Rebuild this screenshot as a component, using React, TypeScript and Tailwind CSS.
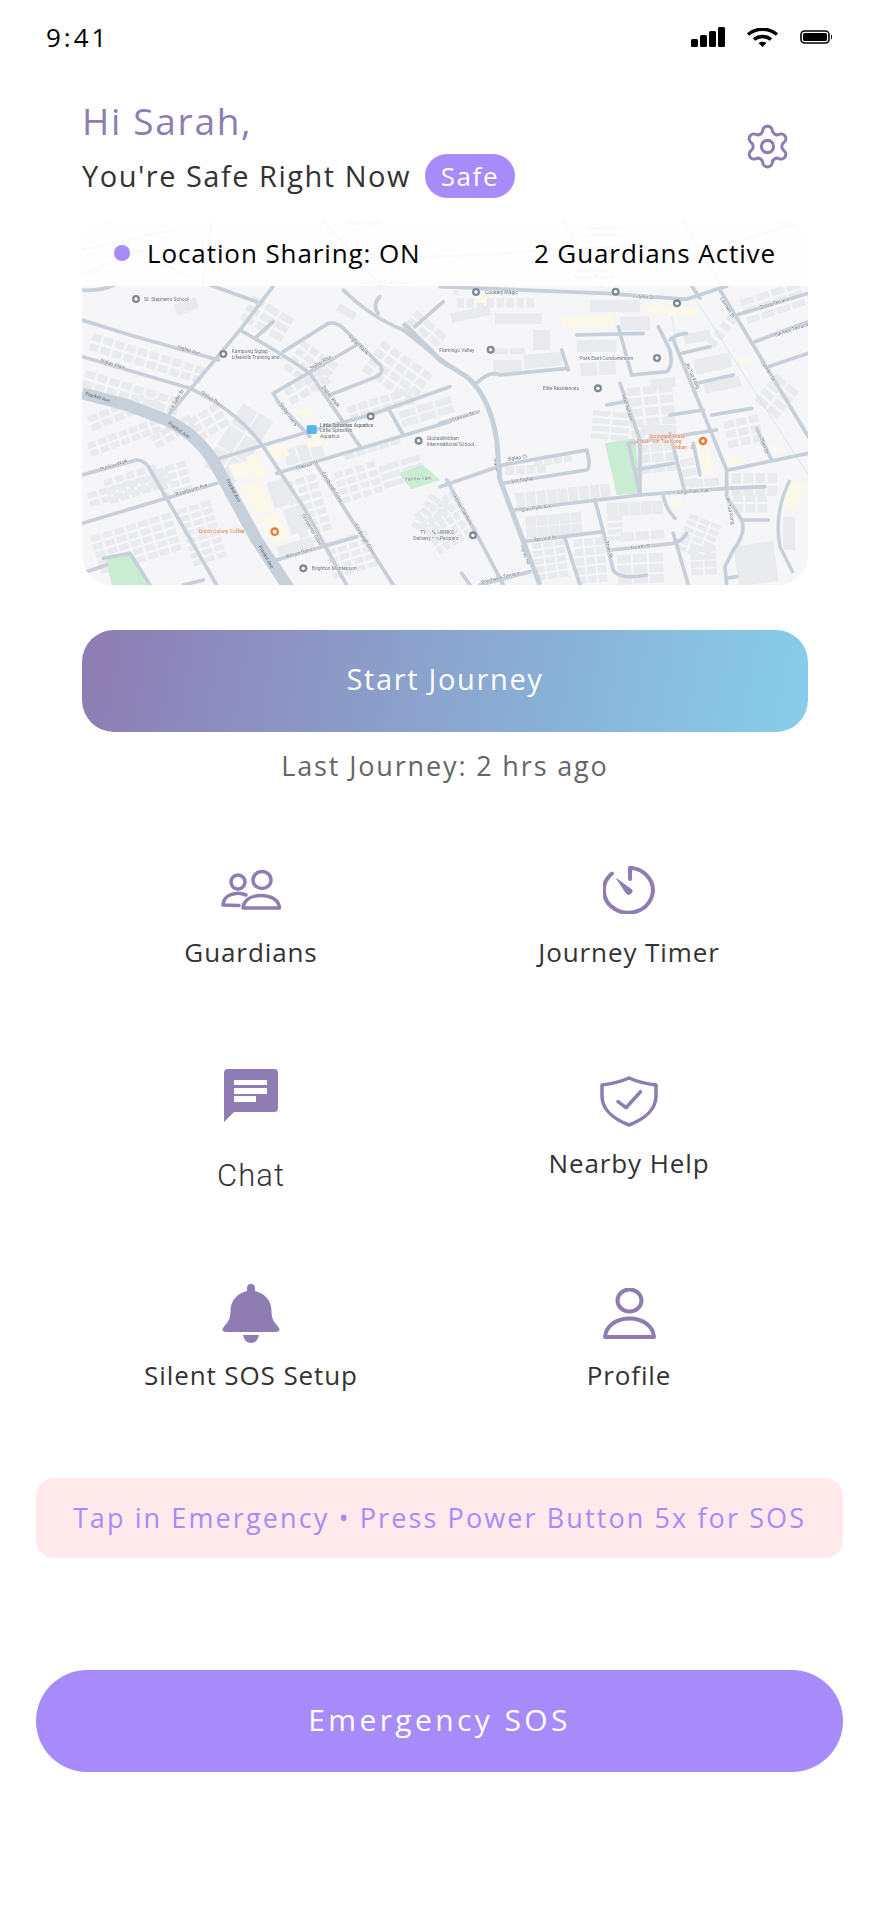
import React from 'react';
import { Settings } from 'lucide-react';

type Block = [number, number, number, number, number, number, number, number];
type Label = [string, number, number, number?, string?];

const leftRoads = [
  'M36 30 Q90 35 140 12',
  'M420 15 L560 65',
  'M36 120 L180 165 L445 240',
  'M610 18 L510 150 L300 400',
  'M36 230 L360 325 Q500 390 580 500 L700 680 L830 915',
  'M510 150 Q650 230 720 280 L870 500',
  'M610 340 L860 195',
  'M610 340 L630 375 L720 470',
  'M640 215 L775 130 Q800 125 820 145 L930 255 Q945 275 920 290 L780 345',
  'M450 535 L700 460 L900 405 L1140 320',
  'M620 580 L1140 425',
  'M36 585 L200 540 Q220 540 235 560 L440 915',
  'M36 730 L440 610',
  'M740 555 L970 915',
  'M620 840 L860 770',
  'M560 170 L610 125',
  'M820 30 Q900 110 1000 150 L1140 260',
  'M930 50 Q905 75 925 100',
  'M1035 140 L1120 65',
  'M955 385 L1000 465',
  'M36 880 L110 855',
  'M100 835 L180 820 L240 915',
  'M340 915 L400 900',
];

const rightRoads = [
  'M0 20 L500 40 L740 58 L860 18',
  'M755 18 L780 55',
  'M840 30 L1105 470',
  'M890 105 L1105 40',
  'M945 185 L1105 125',
  'M985 260 L1105 220',
  'M110 310 Q150 270 180 285 L380 265',
  'M365 210 L385 270',
  'M410 165 L610 160',
  'M535 140 L575 285 L680 275 Q700 260 690 210 L655 140',
  'M690 180 Q710 160 740 160',
  'M700 180 L860 570 L860 650 L905 720 Q920 760 880 810 L855 860 L860 915',
  'M725 220 L810 200',
  'M770 310 L880 285',
  'M690 405 L790 390',
  'M815 405 L935 385',
  'M540 310 L600 480 L600 645',
  'M500 375 L555 365',
  'M0 620 L190 555 L440 510 Q455 560 440 570 L190 610',
  'M20 600 L130 800 L190 915',
  'M565 490 L830 450',
  'M565 490 L600 640',
  'M585 570 L700 550',
  'M690 460 L735 640',
  'M760 490 L780 585',
  'M220 690 L600 645 L860 625 L975 620',
  'M670 650 Q680 690 705 715',
  'M465 660 L520 870 Q535 900 620 885',
  'M250 785 L490 755',
  'M375 775 L420 915',
  'M515 810 L700 790 Q730 780 740 760',
  'M700 760 L745 915',
  'M120 915 L270 875',
  'M65 880 L90 915',
  'M865 570 L1105 520',
  'M950 445 L995 540',
  'M905 720 L985 720',
  'M860 895 L890 890',
  'M0 430 L115 395',
];

const leftBlocks: Block[] = [
  [70, 160, 10, 2, 28, 22, 8, 17],
  [50, 270, 8, 2, 30, 22, 8, 17],
  [50, 410, 6, 2, 30, 20, 8, -22],
  [50, 490, 7, 2, 26, 18, 7, -20],
  [100, 600, 5, 3, 26, 20, 8, -17],
  [50, 640, 7, 2, 30, 18, 7, -17],
  [60, 770, 7, 5, 30, 18, 7, -17],
  [250, 570, 3, 4, 28, 18, 7, -17],
  [320, 690, 3, 8, 30, 16, 7, -17],
  [350, 420, 3, 3, 30, 20, 8, -30],
  [240, 470, 4, 2, 28, 18, 7, -30],
  [640, 610, 3, 7, 28, 18, 8, -17],
  [760, 790, 4, 5, 28, 16, 8, -17],
  [550, 45, 3, 3, 42, 22, 8, 30],
  [700, 180, 4, 4, 26, 20, 8, 35],
  [810, 70, 1, 1, 60, 24, 8, 30],
  [310, 75, 1, 1, 70, 35, 0, -20],
  [640, 330, 4, 2, 28, 22, 8, -30],
  [830, 380, 6, 2, 28, 22, 6, -17],
  [985, 395, 3, 2, 50, 22, 6, -17],
  [940, 180, 5, 4, 30, 22, 8, 35],
  [790, 580, 4, 4, 26, 18, 8, -17],
  [820, 520, 5, 1, 30, 22, 6, -17],
  [925, 560, 2, 3, 60, 18, 8, -17],
  [1080, 640, 2, 5, 36, 16, 8, 30],
  [520, 370, 2, 3, 50, 70, 6, 32],
  [590, 610, 1, 1, 60, 80, 0, -18],
  [640, 690, 1, 1, 58, 80, 0, -18],
  [640, 510, 3, 1, 35, 50, 5, -15],
  [620, 800, 1, 1, 110, 30, 0, -16],
  [1040, 90, 3, 3, 34, 20, 8, 40],
];

const rightBlocks: Block[] = [
  [30, 100, 1, 1, 120, 30, 0, -12],
  [165, 100, 1, 1, 140, 32, 0, 0],
  [50, 55, 8, 1, 22, 28, 8, 0],
  [450, 60, 1, 1, 150, 36, 0, 0],
  [540, 110, 1, 1, 90, 40, 0, 0],
  [410, 180, 1, 1, 120, 36, 0, 0],
  [160, 205, 2, 1, 44, 18, 6, 0],
  [250, 225, 1, 1, 115, 42, 0, -5],
  [160, 240, 1, 1, 85, 40, 0, 0],
  [280, 150, 1, 1, 50, 60, 0, 0],
  [420, 250, 2, 1, 50, 40, 6, -4],
  [730, 165, 1, 1, 80, 30, 0, -12],
  [760, 240, 1, 1, 110, 45, 0, -12],
  [790, 310, 1, 1, 110, 32, 0, -12],
  [630, 300, 1, 1, 75, 30, 0, -8],
  [560, 325, 3, 5, 40, 24, 8, -6],
  [460, 390, 2, 4, 52, 16, 7, 5],
  [605, 435, 1, 1, 100, 30, 0, 0],
  [850, 425, 3, 3, 30, 22, 8, -12],
  [900, 60, 4, 3, 40, 20, 8, -18],
  [870, 100, 1, 4, 32, 20, 10, 40],
  [1010, 280, 2, 4, 40, 20, 8, 40],
  [590, 495, 3, 3, 36, 26, 5, -6],
  [720, 540, 1, 3, 42, 22, 8, -10],
  [745, 600, 2, 1, 44, 24, 4, -4],
  [875, 580, 4, 2, 28, 30, 8, 0],
  [225, 640, 9, 1, 28, 42, 4, -6],
  [195, 560, 4, 1, 26, 26, 6, -4],
  [280, 530, 4, 1, 24, 30, 6, -8],
  [880, 640, 3, 2, 30, 26, 6, 0],
  [500, 670, 5, 1, 32, 40, 2, -3],
  [255, 710, 5, 2, 32, 32, 2, -5],
  [275, 790, 3, 5, 28, 18, 6, -8],
  [400, 780, 3, 5, 26, 22, 6, -6],
  [540, 760, 3, 1, 40, 26, 6, -5],
  [530, 825, 3, 3, 42, 26, 6, -3],
  [750, 700, 3, 6, 30, 14, 6, 22],
  [750, 800, 2, 4, 36, 18, 5, -3],
  [880, 800, 1, 1, 120, 120, 0, -8],
  [1030, 710, 1, 1, 35, 100, 0, 0],
  [40, 630, 5, 6, 24, 18, 6, 58],
  [500, 710, 1, 4, 45, 14, 6, -5],
  [40, 30, 1, 1, 15, 15, 0, 0],
];

const leftGreen = ['108,835 180,820 235,915 125,915', '985,580 1060,555 1110,600 1025,628'];
const rightGreen = ['495,490 585,475 605,640 530,645'];
const leftYellow = [
  '670,395 720,380 730,405 700,415',
  '590,505 640,490 660,525 615,540',
  '700,470 770,460 785,490 715,505',
  '525,530 560,520 595,590 550,600',
  '475,555 525,545 540,590 495,600',
  '515,620 570,605 615,690 550,700',
  '565,710 625,695 665,775 610,790',
];
const rightYellow = [
  '365,110 520,105 525,140 370,145',
  '610,75 775,85 775,110 615,100',
  '895,235 930,230 935,255 905,260',
  '770,490 805,490 820,585 785,585',
  '1050,600 1100,615 1065,695 1018,680',
  '690,655 725,655 725,680 695,678',
  '860,530 900,525 905,550 865,555',
  '985,495 1035,505 1010,520',
  '105,45 140,45 138,70 108,70',
];

const leftLabels: Label[] = [
  ["St. Stephen's School", 222, 62],
  ['Kampung Siglap', 485, 220],
  ['Lifeskills Training and...', 485, 237],
  ['Little Splashes Aquatics', 750, 441, 0, '#4a4f55'],
  ['Little Splashes', 750, 457],
  ['Aquatics', 750, 473],
  ['Global Ind', 1070, 481],
  ['Internatio', 1070, 497],
  ['Yarrow Park', 1005, 602, -2, '#5f8f6c'],
  ['Dutch Colony Coffee Co.', 387, 760, 0, '#e8743b'],
  ['Brighton Montessori', 725, 870],
  ['TYVMDRIN', 1050, 763],
  ['Delivery peop', 1030, 779],
  ['Siglap Ave', 322, 205, 17],
  ['Siglap Plain', 90, 245, 18],
  ['Siglap Plain', 392, 340, 35],
  ['Siglap Rise', 722, 270, -30],
  ['Siglap Bank', 835, 170, 45],
  ['Siglap Walk', 755, 322, 52],
  ['Siglap Ave S', 628, 372, 55],
  ['La Salle St', 305, 392, -58],
  ['Dunlow Walk', 92, 572, -17],
  ['Rosebourn Ave', 318, 648, -17],
  ['Cheviot St', 680, 570, -17],
  ['Edinburgh Gdns', 755, 580, 58],
  ['Edinburgh Gdns', 852, 735, 58],
  ['Grosvenor Gdns', 695, 705, 60],
  ['Wilson Gdns', 648, 835, -16],
];

const rightLabels: Label[] = [
  ['Cookery Magic', 135, 42],
  ['Fidelio St', 580, 53, 4],
  ['Carmen St', 840, 55, 58],
  ['Carmen St', 962, 245, 58],
  ['Zehra Terrace', 962, 88, -18],
  ['Carmen Terrace', 1005, 170, -18],
  ['Flamingo Valley', -2, 215],
  ['Park East Condominium', 420, 241],
  ['Elite Residences', 308, 331],
  ['Elite Terrace', 545, 345, 72],
  ['Jln Tua Kong', 735, 250, 65],
  ['Jln Tua Kong', 857, 650, 78],
  ['Springleaf Prata', 628, 474, 0, '#e8743b'],
  ['Place - Jln Tua Kong', 590, 490, 0, '#e8743b'],
  ['Indian · $', 700, 506, 0, '#e8743b'],
  ['Siglap Cl', 203, 542, -8],
  ['Lor Siglap', 215, 608, -8],
  ['Siglap Rd', 162, 535, 80],
  ['Siglap Rd', 243, 795, 72],
  ['Elite Park Ave', 715, 642, -4],
  ['Elite Park Ave', 245, 695, -8],
  ['Second St', 282, 784, -6],
  ['Third St', 495, 785, 74],
  ['Fourth St', 572, 808, -6],
  ['Cheviot St', 38, 425, -18],
  ['Fernie Gardens', 40, 650, 60],
  ['Elgin St', 960, 475, 70],
  ['RINKS -', 0, 763],
  ["People's", 0, 779],
  ['al Indian', 0, 481],
  ['national School...', 0, 497],
  ['Prestwick Terrace', 125, 912, -14],
];

const leftPins: [number, number][] = [
  [198, 57], [460, 222], [1046, 482], [700, 865], [902, 409],
];
const rightPins: [number, number][] = [
  [108, 36], [527, 35], [711, 70], [152, 209], [651, 234], [474, 325], [99, 766],
];

const BlockRects: React.FC<{ blocks: Block[] }> = ({ blocks }) => (
  <g fill="#e9eaee">
    {blocks.map(([x, y, cols, rows, w, h, gap, angle], i) => (
      <g key={i} transform={`translate(${x} ${y}) rotate(${angle})`}>
        {Array.from({ length: rows }).flatMap((_, r) =>
          Array.from({ length: cols }).map((__, c) => (
            <rect key={`${r}-${c}`} x={c * (w + gap)} y={r * (h + gap)} width={w} height={h} />
          ))
        )}
      </g>
    ))}
  </g>
);

const MapLayer: React.FC<{
  blocks: Block[];
  roads: string[];
  green: string[];
  yellow: string[];
  labels: Label[];
  pins: [number, number][];
}> = ({ blocks, roads, green, yellow, labels, pins }) => (
  <>
    <BlockRects blocks={blocks} />
    {green.map((p) => (
      <polygon key={p} points={p} fill="#c8edd2" />
    ))}
    {yellow.map((p) => (
      <polygon key={p} points={p} fill="#fcf8ea" />
    ))}
    <g fill="none" stroke="#c6cfda" strokeWidth="11" strokeLinecap="round" strokeLinejoin="round">
      {roads.map((d) => (
        <path key={d} d={d} />
      ))}
    </g>
    {pins.map(([x, y]) => (
      <g key={`${x}-${y}`}>
        <circle cx={x} cy={y} r="12" fill="#7e8a95" />
        <circle cx={x} cy={y} r="5" fill="#ffffff" />
      </g>
    ))}
    {labels.map(([text, x, y, angle, color]) => (
      <text
        key={`${text}-${x}`}
        x={x}
        y={y}
        transform={angle ? `rotate(${angle} ${x} ${y})` : undefined}
        fontFamily="Roboto, sans-serif"
        fontSize="15"
        fill={color || '#6f757c'}
        stroke="#f6f6f8"
        strokeWidth="2"
        paintOrder="stroke"
      >
        {text}
      </text>
    ))}
  </>
);

const MapArt = () => (
  <svg viewBox="0 0 726 365" width="726" height="365" className="block blur-[0.4px]">
    <rect width="726" height="365" fill="#f6f6f8" />
    <g fill="none" stroke="#c6cfda" strokeWidth="3">
      <path d="M0 55 L60 30 L110 60 M130 0 L120 66 M240 0 L300 66 M480 0 L520 66 M600 0 L640 66 M0 30 L90 10 M300 40 L560 25 M660 20 L726 0" />
    </g>
    <g fill="#8a9099" fontFamily="Roboto, sans-serif" fontSize="6">
      <text x="265" y="5">Siglap Hill Dr</text>
      <text x="504" y="10">Opera Estate</text>
      <text x="504" y="17">Football Park</text>
      <text x="492" y="52">Opera Estate</text>
      <text x="492" y="59">Primary School</text>
      <text x="278" y="64">Bethany Evangelical</text>
    </g>
    <g transform="translate(-12 60) scale(0.3333)">
      <MapLayer
        blocks={leftBlocks}
        roads={leftRoads}
        green={leftGreen}
        yellow={leftYellow}
        labels={leftLabels}
        pins={leftPins}
      />
      <path
        d="M36 340 L170 375 L290 420 Q390 470 440 560 L560 780 L660 930"
        fill="none"
        stroke="#c6d0da"
        strokeWidth="36"
      />
      <g fill="#5f6a73" fontFamily="Roboto, sans-serif" fontSize="15">
        <text x="45" y="345" transform="rotate(17 45 345)">Frankel Ave</text>
        <text x="293" y="432" transform="rotate(35 293 432)">Frankel Ave</text>
        <text x="468" y="600" transform="rotate(62 468 600)">Frankel Ave</text>
        <text x="565" y="800" transform="rotate(60 565 800)">Frankel Ave</text>
      </g>
      <circle cx="614" cy="755" r="13" fill="#ee7a3a" />
      <circle cx="614" cy="755" r="6" fill="#ffffff" />
      <rect x="710" y="436" width="30" height="26" rx="4" fill="#56b4e9" />
    </g>
    <g transform="translate(358 60) scale(0.3333)">
      <MapLayer
        blocks={rightBlocks}
        roads={rightRoads}
        green={rightGreen}
        yellow={rightYellow}
        labels={rightLabels}
        pins={rightPins}
      />
      <path
        d="M-110 130 L0 240 L80 290 Q150 350 170 480 L180 600 L300 915"
        fill="none"
        stroke="#c6d0da"
        strokeWidth="15"
      />
      <path d="M1050 600 Q1000 700 1020 800 L1060 880" fill="none" stroke="#c6d0da" strokeWidth="10" />
      <path d="M765 55 L1105 585 M695 110 L710 180" fill="none" stroke="#bfe6cf" strokeWidth="2" />
      <circle cx="789" cy="483" r="13" fill="#ee7a3a" />
      <circle cx="789" cy="483" r="5" fill="#ffffff" />
    </g>
  </svg>
);

const StatusIcons = () => (
  <div className="flex items-center">
    <svg width="35" height="20" viewBox="0 0 35 20" fill="#000000">
      <rect x="0" y="12" width="7" height="8" rx="1.5" />
      <rect x="9" y="8" width="7" height="12" rx="1.5" />
      <rect x="18" y="4" width="7" height="16" rx="1.5" />
      <rect x="27" y="0" width="7" height="20" rx="1.5" />
    </svg>
    <svg width="33" height="19" viewBox="0 0 33 19" fill="none" stroke="#000000" className="ml-[20px]">
      <path d="M2 6.5 C10 -0.5 23 -0.5 31 6.5" strokeWidth="3.5" />
      <path d="M8 11.5 C13 7.5 20 7.5 25 11.5" strokeWidth="3.5" />
      <path d="M12.5 15 L16.5 19 L20.5 15 C18 13.2 15 13.2 12.5 15Z" fill="#000000" strokeWidth="0" />
    </svg>
    <svg width="33" height="14" viewBox="0 0 33 14" fill="none" className="ml-[21px]">
      <rect x="1" y="1" width="28" height="12" rx="3.5" stroke="#000000" strokeWidth="1.6" />
      <rect x="3" y="3" width="24" height="8" rx="1.5" fill="#000000" />
      <path d="M31 4.5 C32.4 5 32.4 9 31 9.5Z" fill="#000000" />
    </svg>
  </div>
);

const GuardiansIcon = () => (
  <svg width="60" height="40" viewBox="0 0 60 40" fill="none" stroke="#8e7cb3" strokeWidth="3.5" strokeLinecap="round" strokeLinejoin="round">
    <ellipse cx="17" cy="12" rx="7" ry="7" />
    <ellipse cx="41" cy="10" rx="9" ry="8.5" />
    <path d="M22 38 C23 30 30 25.5 40 25.5 C50 25.5 58 30 58.5 38 Z" />
    <path d="M25 25 C21 23.5 18 23 15 23.5 C8 24 2.5 28 2 35 L18 35.5" />
  </svg>
);

const TimerIcon = () => (
  <svg width="53" height="48" viewBox="0 0 53 48" fill="none" stroke="#8e7cb3" strokeWidth="4" strokeLinecap="round" strokeLinejoin="round">
    <path d="M9 7.5 A24.5 22.5 0 1 0 27 1.8 V13" />
    <path d="M14 13 L29 24 A3.5 3.5 0 0 1 24 28 Z" fill="#8e7cb3" strokeWidth="1" />
  </svg>
);

const ChatIcon = () => (
  <svg width="54" height="53" viewBox="0 0 54 53">
    <path d="M4 0 H50 A4 4 0 0 1 54 4 V39 A4 4 0 0 1 50 43 H10 L0 53 V4 A4 4 0 0 1 4 0 Z" fill="#8e7cb3" />
    <rect x="10" y="11" width="33" height="5" fill="#ffffff" />
    <rect x="10" y="19" width="33" height="6" fill="#ffffff" />
    <rect x="10" y="27" width="22" height="6" fill="#ffffff" />
  </svg>
);

const ShieldIcon = () => (
  <svg width="58" height="51" viewBox="0 0 58 51" fill="none" stroke="#8e7cb3" strokeWidth="3.5" strokeLinecap="round" strokeLinejoin="round">
    <path d="M29 2 C20 6 11 8 2 9 V20 C2 33 13 43 29 49 C45 43 56 33 56 20 V9 C47 8 38 6 29 2 Z" />
    <path d="M18 25.6 L26 31.7 L40.5 15.7" />
  </svg>
);

const BellIcon = () => (
  <svg width="58" height="59" viewBox="0 0 58 59" fill="#8e7cb3">
    <path d="M25 7 V4 A4 4 0 0 1 33 4 V7 C42 9 49.5 16 49.5 27 C49.5 35 52 38 56 42.5 C59 46 57 48 54 48 H4 C1 48 -1 46 2 42.5 C6 38 8.5 35 8.5 27 C8.5 16 16 9 25 7 Z" />
    <path d="M21 51 H37 C36 56 33 59 29 59 C25 59 22 56 21 51 Z" />
  </svg>
);

const ProfileIcon = () => (
  <svg width="53" height="51" viewBox="0 0 53 51" fill="none" stroke="#8e7cb3" strokeWidth="4" strokeLinejoin="round">
    <ellipse cx="26.5" cy="12.5" rx="12" ry="11" />
    <path d="M2 49 C3 38 13 30.5 26.5 30.5 C40 30.5 50 38 51 49 Z" />
  </svg>
);

const Tile: React.FC<{
  icon: React.ReactNode;
  label: string;
  className?: string;
  labelClass?: string;
}> = ({ icon, label, className, labelClass }) => (
  <div className={`flex flex-col items-center ${className || ''}`}>
    {icon}
    <span className={labelClass || 'text-[26px] leading-[32px] tracking-[0.9px] text-[#333333]'}>{label}</span>
  </div>
);

export default function App() {
  return (
    <div className="flex h-[1912px] w-[880px] flex-col overflow-hidden bg-white font-['Open_Sans',sans-serif]">
      <div className="flex h-[72px] items-center justify-between pl-[46px] pr-[47px] pt-[2px]">
        <span className="text-[26px] tracking-[3px] text-black">9:41</span>
        <StatusIcons />
      </div>

      <div className="flex flex-col pl-[82px] pr-[72px]">
        <div className="mt-[27px] flex items-center justify-between pr-[16px]">
          <div className="flex flex-col">
            <h1 className="text-[37px] leading-[44px] tracking-[1.7px] text-[#8e7cb3]">Hi Sarah,</h1>
            <div className="mt-[11px] flex items-center gap-[14px]">
              <span className="text-[29px] leading-[44px] tracking-[1.5px] text-[#333333]">You're Safe Right Now</span>
              <span className="flex h-[44px] w-[90px] items-center justify-center rounded-[22px] bg-[#a78bfa] text-[26px] tracking-[1.6px] text-white">
                Safe
              </span>
            </div>
          </div>
          <Settings size={49} strokeWidth={1.5} color="#8e7cb3" className="mb-[5px]" />
        </div>

        <div className="relative mt-[22px] h-[365px] w-[726px] overflow-hidden rounded-[30px]">
          <MapArt />
          <div className="absolute inset-x-0 top-0 flex h-[66px] items-center justify-between bg-white/90 pl-[32px] pr-[32px] text-[26px] tracking-[0.9px] text-black">
            <div className="flex items-center gap-[17px]">
              <span className="h-[16px] w-[16px] rounded-full bg-[#a78bfa]" />
              <span>Location Sharing: ON</span>
            </div>
            <span>2 Guardians Active</span>
          </div>
        </div>

        <button className="mt-[45px] flex h-[102px] w-[726px] items-center justify-center rounded-[32px] bg-[linear-gradient(100deg,#8e7cb3,#87ceeb)] pb-[4px] text-[29px] tracking-[1.65px] text-white">
          Start Journey
        </button>
        <p className="mt-[18px] mb-[2px] w-[726px] text-center text-[27px] leading-[32px] tracking-[1.85px] text-[#666666]">
          Last Journey: 2 hrs ago
        </p>

        <div className="mt-[82px] grid grid-cols-[338px_338px] grid-rows-[203px_215px_108px] gap-x-[40px]">
          <Tile icon={<GuardiansIcon />} label="Guardians" className="gap-[26px] pt-[4px]" />
          <Tile icon={<TimerIcon />} label="Journey Timer" className="gap-[22px]" />
          <Tile
            icon={<ChatIcon />}
            label="Chat"
            className="gap-[36px]"
            labelClass="font-[Roboto,sans-serif] text-[31px] font-[350] leading-[36px] tracking-[1px] text-[#333333]"
          />
          <Tile icon={<ShieldIcon />} label="Nearby Help" className="gap-[20px] pt-[7px]" />
          <Tile icon={<BellIcon />} label="Silent SOS Setup" className="gap-[16px]" />
          <Tile icon={<ProfileIcon />} label="Profile" className="gap-[20px] pt-[4px]" />
        </div>
      </div>

      <div className="flex flex-col pl-[36px] pr-[37px]">
        <div className="mt-[86px] flex h-[80px] items-center justify-center rounded-[18px] bg-[#ffe9eb] text-[27px] tracking-[2.1px] text-[#a78bfa]">
          Tap in Emergency • Press Power Button 5x for SOS
        </div>
        <button className="mt-[112px] flex h-[102px] items-center justify-center rounded-[51px] bg-[#a78bfa] pb-[4px] text-[30px] tracking-[3.4px] text-white">
          Emergency SOS
        </button>
      </div>
    </div>
  );
}
